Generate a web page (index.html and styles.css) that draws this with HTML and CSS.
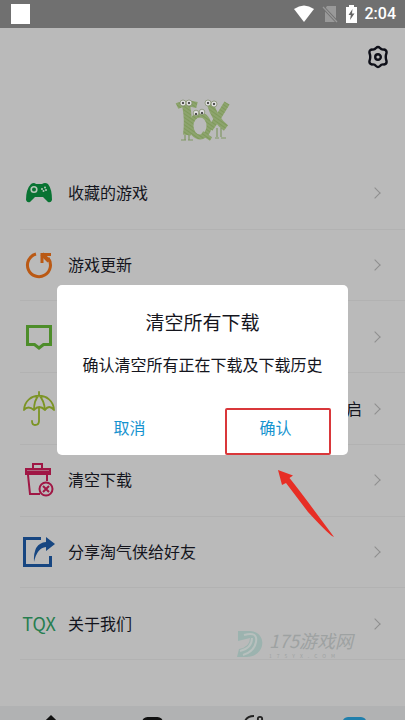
FILE: index.html
```html
<!DOCTYPE html>
<html lang="zh-CN">
<head>
<meta charset="utf-8">
<meta name="viewport" content="width=device-width, initial-scale=1">
<title>清空下载</title>
<link rel="stylesheet" href="styles.css">
</head>
<body>
<div class="app">
  <header class="status">
    <span class="status-app"></span>
    <div class="status-icons">
      <svg width="20" height="18" viewBox="0 0 20 18"><path d="M0 4Q10-3 20 4L10 17Z" fill="#fff"/></svg>
      <svg width="16" height="18" viewBox="0 0 16 18"><path d="M5 1h9v16H3V4z" fill="#999"/><path d="M1 2l14 15" stroke="#707070" stroke-width="3"/><path d="M1 2l14 15" stroke="#999" stroke-width="1.3"/></svg>
      <svg width="11" height="18" viewBox="0 0 11 18"><path d="M3 0h5v2h3v16H0V2h3z" fill="#fff"/><path d="M6.5 4L2.5 10h2.300L4 15l4.500-6.500H6z" fill="#666"/></svg>
      <time>2:04</time>
    </div>
  </header>
  <div class="toolbar">
    <button class="settings" aria-label="设置">
      <svg width="22" height="24" viewBox="0 0 22 24" fill="none" stroke="#0e0f18" stroke-width="2.4" stroke-linejoin="round"><path d="M9 3Q11 1 13 3Q14.500 5 17 4.500Q20 5 19.500 8Q18 12 19.500 16Q20 19 17 19.500Q14.500 19 13 21Q11 23 9 21Q7.500 19 5 19.500Q2 19 2.500 16Q4 12 2.500 8Q2 5 5 4.500Q7.500 5 9 3Z"/><circle cx="11" cy="12" r="2.800"/></svg>
    </button>
  </div>
  <div class="brand">
    <svg width="56" height="48" viewBox="0 0 56 48">
      <defs><pattern id="fuzz" width="3" height="3" patternUnits="userSpaceOnUse" patternTransform="rotate(35)"><rect width="3" height="3" fill="#7f9a5b"/><path d="M0 1h3" stroke="#9bae80" stroke-width="1"/></pattern></defs>
      <g fill="none" stroke="url(#fuzz)">
        <path d="M2 9Q10 5 22 8" stroke-width="6"/>
        <path d="M11 8Q14 22 12 38" stroke-width="8"/>
        <ellipse cx="25" cy="29" rx="9" ry="11" stroke-width="5"/>
        <path d="M27 36L36 42" stroke-width="4"/>
        <path d="M35 6Q40 23 51 31" stroke-width="7"/>
        <path d="M52 6Q44 20 35 32" stroke-width="6"/>
      </g>
      <path d="M10 38v5M14 38v5M6 43h5M13 43h5M42 31v9M46 31v9M40 41h4M46 41h5" stroke="#809764" stroke-width="1.2"/>
      <g fill="#ddd" stroke="#7c8967" stroke-width=".7"><circle cx="8" cy="6" r="3"/><circle cx="14" cy="6" r="3"/><circle cx="21" cy="16" r="2.800"/><circle cx="27" cy="15" r="2.800"/><circle cx="33" cy="6" r="3"/><circle cx="39" cy="7" r="3"/></g>
      <g fill="#222"><circle cx="8" cy="6" r="1"/><circle cx="14" cy="6" r="1"/><circle cx="21" cy="17" r="1"/><circle cx="27" cy="16" r="1"/><circle cx="33" cy="6" r="1"/><circle cx="39" cy="7" r="1"/></g>
    </svg>
  </div>
  <main class="menu">
    <a class="row" href="#favorites">
      <span class="icon"><svg width="28" height="22" viewBox="0 0 28 22"><path d="M6 2Q9 0 11 2h6Q20 0 23 2Q27 7 27 18Q26 21 23 20L18 15H10L5 20Q2 21 1 18Q1 7 6 2Z" fill="#087332"/><circle cx="9" cy="7.500" r="2.800" fill="none" stroke="#b5c6b8" stroke-width="1.600"/><g fill="#b5c6b8"><circle cx="17" cy="7" r="1"/><circle cx="20" cy="5.500" r="1"/><circle cx="18.500" cy="9" r="1"/><circle cx="21" cy="8" r="1"/></g></svg></span>
      <span class="label">收藏的游戏</span><span class="chevron"></span>
    </a>
    <a class="row" href="#updates">
      <span class="icon"><svg width="28" height="28" viewBox="0 0 28 28" fill="none" stroke="#ba5914" stroke-width="3"><path d="M11 3A11.500 11.500 0 1 0 23 7"/><path d="M17 12V3.500H26"/><path d="M17 3l7 7" stroke-width="4"/></svg></span>
      <span class="label">游戏更新</span><span class="chevron"></span>
    </a>
    <a class="row" href="#feedback" aria-label="反馈">
      <span class="icon"><svg width="28" height="28" viewBox="0 0 28 28"><path d="M2.500 3.500h23v18h-7L14 25l-4.500-3.500h-7z" fill="none" stroke="#4d8d2a" stroke-width="3"/></svg></span>
      <span class="label"></span><span class="chevron"></span>
    </a>
    <a class="row" href="#protection">
      <span class="icon"><svg width="34" height="36" viewBox="0 0 34 36" fill="none" stroke="#7c9425" stroke-width="1.800" stroke-linecap="round" stroke-linejoin="round"><path d="M17 1v3M2 19C3 0 31 0 32 19Q27 13 23 19Q17 13 12 19Q6 14 2 19ZM17 4Q12 9 12 19M17 4Q22 9 23 19M17 17v13Q17 34 13 34Q10 34 10 30"/></svg></span>
      <span class="label"></span><span class="value">启</span><span class="chevron"></span>
    </a>
    <a class="row" href="#clear">
      <span class="icon"><svg width="30" height="36" viewBox="0 0 30 36" fill="none" stroke="#a01745" stroke-width="2"><path d="M9 6V2h9v4M2 7h24v5H2zM4 13l2 19h10M23 13v6"/><path d="M2 10h24" stroke-width="3"/><circle cx="22" cy="27" r="6.500"/><path d="M19 24l6 6M25 24l-6 6"/></svg></span>
      <span class="label">清空下载</span><span class="chevron"></span>
    </a>
    <a class="row" href="#share">
      <span class="icon"><svg width="34" height="32" viewBox="0 0 34 32"><path d="M19 2.500H2.500v27h26V20" fill="none" stroke="#174681" stroke-width="3"/><path d="M12 26Q11 7 24 6V1l9 7-9 7V11Q15 12 12 26Z" fill="#174681"/></svg></span>
      <span class="label">分享淘气侠给好友</span><span class="chevron"></span>
    </a>
    <a class="row" href="#about">
      <span class="icon tqx">TQX</span>
      <span class="label">关于我们</span><span class="chevron"></span>
    </a>
  </main>
  <nav class="tabs">
    <a href="#home" aria-label="首页"><svg width="30" height="28" viewBox="0 0 30 28"><path d="M4 16L15 5l11 11v10H4z" fill="none" stroke="#111" stroke-width="3"/></svg></a>
    <a href="#list" aria-label="分类"><svg width="30" height="28" viewBox="0 0 30 28"><rect x="6.500" y="6.500" width="18" height="18" rx="4" fill="none" stroke="#111" stroke-width="3"/></svg></a>
    <a href="#discover" aria-label="发现"><svg width="30" height="28" viewBox="0 0 30 28" fill="none" stroke="#222" stroke-width="1.800"><path d="M16 4Q7 4 6 13"/><circle cx="22" cy="7" r="2.200"/></svg></a>
    <a href="#me" aria-label="我的"><svg width="30" height="28" viewBox="0 0 30 28"><rect x="5" y="6.500" width="21" height="18" rx="4" fill="#3e91b9" stroke="#207fac" stroke-width="3"/></svg></a>
  </nav>
</div>
<div class="watermark">
  <svg width="28" height="28" viewBox="0 0 28 28"><path d="M2 1H14C32 2 30 27 10 27H1L3 19Q14 17 14 8L2 11Z" fill="#9cb3af"/><path d="M8 5Q22 1 20 12Q18 22 7 25M4 21Q16 18 16 8" fill="none" stroke="#b8c0be" stroke-width="2"/></svg>
  <div><span class="mark-name">175游戏网</span><span class="mark-site">175YX.COM</span></div>
</div>
<div class="overlay">
  <section class="dialog" role="dialog" aria-labelledby="title">
    <h1 id="title">清空所有下载</h1>
    <p>确认清空所有正在下载及下载历史</p>
    <div class="actions"><button>取消</button><button>确认</button></div>
    <span class="highlight"></span>
    <svg class="pointer" width="60" height="72" viewBox="0 0 60 72"><path d="M2 2L17 7.500L13.500 10Q20 18 32 34L58 69Q55 69 32 44L10 15L6 17Z" fill="#e72e25"/></svg>
  </section>
</div>
</body>
</html>
```
FILE: styles.css
```css
* { box-sizing: border-box; }
body {
  margin: 0;
  background: #bababa;
  color: #14151d;
  font-family: "Noto Sans CJK SC", sans-serif;
  font-size: 16px;
}
a { color: inherit; text-decoration: none; }
button { padding: 0; border: 0; background: none; font: inherit; }
svg { display: block; flex: none; }

.app {
  display: flex;
  flex-direction: column;
  height: 100vh;
  min-height: 600px;
  overflow: hidden;
}
.status {
  display: flex;
  flex: none;
  align-items: center;
  justify-content: space-between;
  height: 28px;
  padding: 0 9px 0 11px;
  background: #707070;
}
.status-app { width: 19px; height: 20px; background: #fff; }
.status-icons { display: flex; align-items: center; gap: 8px; }
.status time {
  color: #fff;
  font: 500 16px/20px Roboto, sans-serif;
}
.toolbar {
  display: flex;
  flex: none;
  justify-content: flex-end;
  padding: 17px 16px 0 0;
}
.brand {
  display: flex;
  flex: none;
  justify-content: center;
  padding: 28px 0 13px;
}
.menu {
  display: flex;
  flex: 1;
  flex-direction: column;
  margin: 0 0 46px 20px;
}
.row {
  display: flex;
  flex: 1;
  align-items: center;
  padding-right: 26px;
  border-bottom: 1px solid #b2b2b2;
}
.icon {
  display: flex;
  flex: none;
  justify-content: center;
  width: 38px;
  margin-right: 10px;
}
.label { flex: 1; }
.label, .value { padding-bottom: 2px; }
.value { margin-right: 9px; }
.tqx { color: #277e50; font-size: 18px; padding-bottom: 2px; }
.chevron {
  width: 8px;
  height: 8px;
  border: solid #8e8e8e;
  border-width: 1px 1px 0 0;
  transform: rotate(45deg);
}
.tabs {
  display: flex;
  flex: none;
  height: 14px;
  overflow: hidden;
  background: #b1b2b3;
}
.tabs a { display: flex; flex: 1; justify-content: center; padding-top: 6px; }

.overlay {
  position: fixed;
  inset: 0;
  display: flex;
  align-items: center;
  justify-content: center;
  padding-top: 20px;
}
.dialog {
  position: relative;
  width: 72%;
  border-radius: 5px;
  background: #fff;
  text-align: center;
}
.dialog h1 {
  margin: 0;
  padding-top: 23px;
  font-size: 19px;
  font-weight: 400;
  line-height: 28px;
}
.dialog p { margin: 0; padding: 16px 0 24px; line-height: 24px; white-space: nowrap; }
.actions { display: flex; }
.actions button { flex: 1; height: 55px; padding-bottom: 2px; color: #1693cf; }
.highlight {
  position: absolute;
  right: 17px;
  bottom: 0;
  width: 106px;
  height: 47px;
  border: 2px solid #d9373a;
  border-radius: 2px;
  pointer-events: none;
}
.pointer { position: absolute; top: 183px; right: 12px; }

.watermark {
  position: absolute;
  right: 52px;
  bottom: 60px;
  display: flex;
  align-items: center;
  gap: 5px;
  color: #9ea2a2;
}
.mark-name, .mark-site { display: block; }
.mark-name { font-size: 18px; font-style: italic; line-height: 24px; }
.mark-site { font-size: 5px; line-height: 8px; letter-spacing: 5px; }
```
